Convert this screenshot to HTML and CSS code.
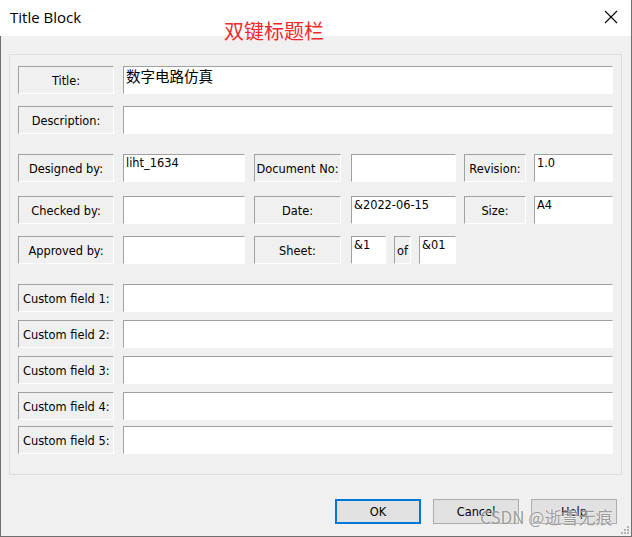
FILE: index.html
```html
<!DOCTYPE html>
<html lang="en">
<head>
  <meta charset="UTF-8">
  <title>Title Block</title>
  <link rel="stylesheet" href="styles.css">
</head>
<body>
  <div class="window">
    <div class="titlebar">
      <span class="caption">Title Block</span>
      <svg class="close" width="14" height="14" viewBox="0 0 14 14">
        <path d="M1 1 L13 13 M13 1 L1 13" stroke="#000" stroke-width="1.1" fill="none"/>
      </svg>
    </div>
    <div class="note">双键标题栏</div>

    <div class="client">
      <div class="group">
        <div class="row gap-first">
          <div class="lbl w-lbl">Title:</div>
          <div class="field w-full"><span class="cjk">数字电路仿真</span></div>
        </div>
        <div class="row gap-12">
          <div class="lbl w-lbl">Description:</div>
          <div class="field w-full"></div>
        </div>

        <div class="row gap-20">
          <div class="lbl w-lbl">Designed by:</div>
          <div class="field w-in1">liht_1634</div>
          <div class="lbl w-lbl2">Document No:</div>
          <div class="field w-in2"></div>
          <div class="lbl w-lbl3">Revision:</div>
          <div class="field w-in3">1.0</div>
        </div>
        <div class="row gap-14">
          <div class="lbl w-lbl">Checked by:</div>
          <div class="field w-in1"></div>
          <div class="lbl w-lbl2">Date:</div>
          <div class="field w-in2">&amp;2022-06-15</div>
          <div class="lbl w-lbl3">Size:</div>
          <div class="field w-in3">A4</div>
        </div>
        <div class="row gap-12">
          <div class="lbl w-lbl">Approved by:</div>
          <div class="field w-in1"></div>
          <div class="lbl w-lbl2">Sheet:</div>
          <div class="field w-sheet">&amp;1</div>
          <div class="lbl w-of">of</div>
          <div class="field w-sheets">&amp;01</div>
        </div>

        <div class="row gap-20">
          <div class="lbl left w-lbl">Custom field 1:</div>
          <div class="field w-full"></div>
        </div>
        <div class="row gap-8">
          <div class="lbl left w-lbl">Custom field 2:</div>
          <div class="field w-full"></div>
        </div>
        <div class="row gap-8">
          <div class="lbl left w-lbl">Custom field 3:</div>
          <div class="field w-full"></div>
        </div>
        <div class="row gap-8">
          <div class="lbl left w-lbl">Custom field 4:</div>
          <div class="field w-full"></div>
        </div>
        <div class="row gap-6">
          <div class="lbl left w-lbl">Custom field 5:</div>
          <div class="field w-full"></div>
        </div>
      </div>

      <div class="buttons">
        <button class="btn default">OK</button>
        <button class="btn">Cancel</button>
        <button class="btn">Help</button>
      </div>
    </div>

    <div class="watermark">CSDN @逝雪无痕</div>
    <svg class="grip" width="10" height="10" viewBox="0 0 10 10">
      <rect x="7" y="1" width="2" height="2" fill="#b4b4b4"/>
      <rect x="4" y="4" width="2" height="2" fill="#b4b4b4"/>
      <rect x="7" y="4" width="2" height="2" fill="#b4b4b4"/>
      <rect x="1" y="7" width="2" height="2" fill="#b4b4b4"/>
      <rect x="4" y="7" width="2" height="2" fill="#b4b4b4"/>
      <rect x="7" y="7" width="2" height="2" fill="#b4b4b4"/>
    </svg>
  </div>
</body>
</html>
```

FILE: styles.css
```css
body {
  margin: 0;
  background: #fff;
  font-family: "DejaVu Sans", "Noto Sans CJK SC", sans-serif;
  font-size: 11.4px;
  color: #000;
}
.window {
  position: relative;
  width: 632px;
  height: 537px;
  box-sizing: border-box;
  border-right: 1px solid #6f6f6f;
  border-bottom: 1px solid #6f6f6f;
  background: #f0f0f0;
  overflow: hidden;
}
.titlebar {
  height: 36px;
  background: #fff;
  display: flex;
  align-items: center;
  justify-content: space-between;
  padding: 0 13px 0 10px;
}
.caption {
  font-family: "Open Sans", "Noto Sans", sans-serif;
  font-size: 15px;
  margin-top: -2px;
}
.close {
  margin-top: -2px;
}
.note {
  position: absolute;
  left: 224px;
  top: 19px;
  font-family: "Noto Sans CJK SC", sans-serif;
  font-size: 20px;
  line-height: 24px;
  color: #f02a2a;
}
.client {
  height: 500px;
  border-left: 1px solid #6f6f6f;
  overflow: hidden;
}
.group {
  margin: 18px 9px 0 8px;
  border: 1px solid #dcdcdc;
  padding: 0 8px 20px 8px;
}
.row {
  display: flex;
  height: 28px;
}
.gap-first { margin-top: 11px; }
.gap-6 { margin-top: 6px; }
.gap-8 { margin-top: 8px; }
.gap-12 { margin-top: 12px; }
.gap-14 { margin-top: 14px; }
.gap-20 { margin-top: 20px; }

.lbl {
  box-sizing: border-box;
  display: flex;
  align-items: center;
  justify-content: center;
  border: 1px solid;
  border-color: #a0a0a0 #fff #fff #a0a0a0;
  padding-top: 2px;
  white-space: nowrap;
}
.lbl.left {
  justify-content: flex-start;
  padding-left: 4px;
}
.field {
  box-sizing: border-box;
  background: #fff;
  border: 1px solid;
  border-color: #a0a0a0 #fff #fff #a0a0a0;
  padding: 1px 0 0 2px;
  line-height: 14px;
  white-space: nowrap;
}
.cjk {
  font-family: "Noto Sans CJK SC", sans-serif;
  font-size: 14.5px;
  line-height: 15px;
}
.w-lbl { width: 96px; }
.w-full { width: 490px; margin-left: 9px; }
.w-in1 { width: 122px; margin-left: 9px; }
.w-lbl2 { width: 87px; margin-left: 9px; }
.w-in2 { width: 105px; margin-left: 10px; }
.w-lbl3 { width: 62px; margin-left: 8px; }
.w-in3 { width: 79px; margin-left: 8px; }
.w-sheet { width: 35px; margin-left: 10px; }
.w-of { width: 17px; margin-left: 8px; }
.w-sheets { width: 37px; margin-left: 8px; }

.buttons {
  display: flex;
  justify-content: flex-end;
  gap: 12px;
  margin-top: 24px;
  padding-right: 14px;
}
.btn {
  width: 86px;
  height: 25px;
  box-sizing: border-box;
  background: #e1e1e1;
  border: 1px solid #adadad;
  font-family: "DejaVu Sans", sans-serif;
  font-size: 11.4px;
  color: #000;
  padding: 1px 0 0 0;
}
.btn.default {
  border: 2px solid #0078d7;
}
.watermark {
  position: absolute;
  left: 480px;
  top: 504px;
  font-family: "Noto Sans CJK SC", sans-serif;
  font-size: 17px;
  color: rgba(140, 140, 140, 0.85);
  text-shadow: 0 0 2px #fff;
  white-space: nowrap;
}
.grip {
  position: absolute;
  right: 1px;
  bottom: 1px;
}
```
